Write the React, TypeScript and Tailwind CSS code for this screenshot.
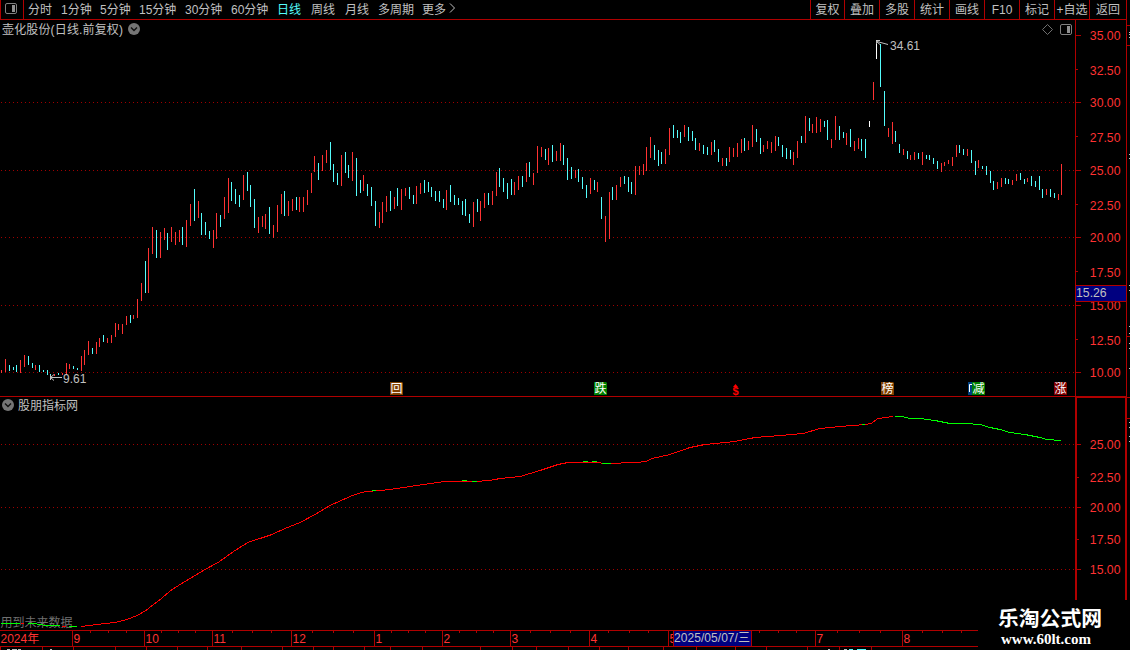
type Kind = 'u' | 'd' | 'w'
type Bar = [number, number, number, Kind]

// x, high, low, direction (u = up, d = down, w = limit move)
const bars: Bar[] = [
  [1, 370, 373, 'u'], [5, 359, 372, 'u'], [9, 365, 371, 'd'], [13, 367, 370, 'd'], [16, 365, 372, 'd'],
  [20, 360, 373, 'u'], [24, 355, 367, 'u'], [28, 356, 365, 'd'], [32, 363, 368, 'd'], [35, 365, 370, 'u'],
  [39, 365, 372, 'd'], [43, 370, 372, 'd'], [47, 370, 375, 'd'], [50, 374, 376, 'd'], [54, 374, 376, 'u'],
  [58, 373, 375, 'd'], [62, 373, 375, 'u'], [66, 363, 374, 'u'], [69, 364, 369, 'u'], [73, 366, 369, 'd'],
  [77, 368, 370, 'd'], [81, 356, 371, 'u'], [84, 350, 365, 'u'], [88, 341, 355, 'u'], [92, 348, 354, 'd'],
  [96, 342, 354, 'u'], [99, 338, 347, 'u'], [103, 335, 342, 'd'], [107, 338, 343, 'u'], [111, 335, 343, 'u'],
  [115, 323, 337, 'u'], [118, 324, 330, 'u'], [122, 324, 334, 'u'], [126, 316, 325, 'u'], [130, 315, 323, 'd'],
  [133, 315, 319, 'u'], [137, 299, 318, 'u'], [141, 283, 301, 'u'], [145, 261, 293, 'd'], [148, 248, 293, 'u'],
  [152, 227, 254, 'u'], [156, 230, 258, 'd'], [160, 232, 258, 'u'], [164, 228, 240, 'u'], [167, 233, 250, 'd'],
  [171, 227, 242, 'u'], [175, 232, 245, 'u'], [179, 230, 242, 'u'], [182, 227, 245, 'd'], [186, 220, 247, 'u'],
  [190, 204, 226, 'u'], [194, 189, 221, 'd'], [198, 201, 218, 'u'], [201, 213, 235, 'd'], [205, 222, 235, 'd'],
  [209, 231, 239, 'd'], [213, 230, 248, 'u'], [216, 213, 239, 'u'], [220, 215, 227, 'd'], [224, 197, 219, 'u'],
  [228, 178, 213, 'u'], [231, 182, 201, 'd'], [235, 189, 204, 'd'], [239, 195, 207, 'd'], [243, 175, 200, 'u'],
  [247, 172, 191, 'd'], [250, 185, 207, 'd'], [254, 199, 228, 'd'], [258, 217, 233, 'u'], [262, 216, 227, 'u'],
  [265, 214, 229, 'u'], [269, 207, 234, 'd'], [273, 225, 238, 'u'], [277, 205, 232, 'u'], [281, 194, 214, 'u'],
  [284, 191, 216, 'd'], [288, 201, 216, 'u'], [292, 199, 211, 'u'], [296, 197, 210, 'd'], [299, 197, 212, 'u'],
  [303, 197, 212, 'u'], [307, 190, 205, 'u'], [311, 173, 193, 'u'], [314, 156, 172, 'u'], [318, 163, 180, 'd'],
  [322, 155, 171, 'u'], [326, 150, 163, 'u'], [330, 142, 170, 'd'], [333, 164, 182, 'd'], [337, 173, 185, 'd'],
  [341, 155, 186, 'u'], [345, 152, 173, 'd'], [348, 165, 178, 'd'], [352, 152, 181, 'u'], [356, 158, 196, 'd'],
  [360, 180, 193, 'd'], [363, 175, 191, 'u'], [367, 184, 196, 'd'], [371, 187, 206, 'd'], [375, 201, 226, 'd'],
  [379, 212, 228, 'u'], [382, 202, 223, 'u'], [386, 196, 212, 'u'], [390, 191, 211, 'd'], [394, 197, 209, 'u'],
  [397, 188, 206, 'd'], [401, 189, 210, 'u'], [405, 188, 196, 'u'], [409, 187, 199, 'd'], [413, 195, 204, 'd'],
  [416, 186, 204, 'u'], [420, 183, 194, 'u'], [424, 180, 193, 'd'], [428, 182, 192, 'd'], [431, 187, 197, 'd'],
  [435, 191, 201, 'd'], [439, 191, 202, 'd'], [443, 199, 208, 'd'], [446, 190, 210, 'u'], [450, 185, 202, 'd'],
  [454, 195, 205, 'd'], [458, 198, 205, 'd'], [462, 201, 215, 'd'], [465, 199, 216, 'd'], [469, 214, 223, 'd'],
  [473, 202, 227, 'u'], [477, 199, 212, 'd'], [480, 201, 221, 'u'], [484, 193, 208, 'u'], [488, 193, 205, 'd'],
  [492, 191, 205, 'u'], [496, 172, 196, 'u'], [499, 168, 187, 'd'], [503, 178, 192, 'd'], [507, 183, 199, 'd'],
  [511, 179, 195, 'd'], [514, 182, 195, 'u'], [518, 176, 190, 'u'], [522, 176, 187, 'd'], [526, 163, 182, 'u'],
  [529, 162, 177, 'd'], [533, 173, 185, 'u'], [537, 146, 173, 'u'], [541, 147, 157, 'u'], [545, 149, 160, 'd'],
  [548, 148, 165, 'u'], [552, 145, 162, 'd'], [556, 151, 161, 'u'], [560, 143, 161, 'u'], [563, 145, 165, 'd'],
  [567, 158, 180, 'd'], [571, 167, 179, 'd'], [575, 170, 178, 'u'], [578, 169, 182, 'd'], [582, 177, 189, 'd'],
  [586, 185, 198, 'd'], [590, 178, 194, 'u'], [594, 180, 190, 'd'], [597, 182, 192, 'u'], [601, 197, 219, 'd'],
  [605, 216, 242, 'u'], [609, 192, 239, 'u'], [612, 187, 200, 'd'], [616, 185, 200, 'u'], [620, 177, 187, 'u'],
  [624, 176, 184, 'd'], [628, 177, 192, 'd'], [631, 182, 194, 'd'], [635, 166, 195, 'u'], [639, 166, 175, 'u'],
  [643, 164, 175, 'u'], [646, 147, 171, 'u'], [650, 137, 158, 'u'], [654, 145, 160, 'd'], [658, 150, 166, 'd'],
  [661, 152, 164, 'd'], [665, 149, 164, 'u'], [669, 128, 155, 'u'], [673, 125, 138, 'd'], [677, 130, 138, 'd'],
  [680, 132, 143, 'd'], [684, 125, 137, 'u'], [688, 127, 141, 'd'], [692, 131, 141, 'd'], [695, 138, 150, 'd'],
  [699, 143, 151, 'u'], [703, 145, 154, 'd'], [707, 147, 155, 'd'], [711, 142, 155, 'u'], [714, 140, 152, 'd'],
  [718, 149, 162, 'd'], [722, 158, 166, 'u'], [726, 158, 166, 'd'], [729, 147, 162, 'u'], [733, 148, 157, 'u'],
  [737, 143, 157, 'u'], [741, 139, 153, 'u'], [744, 138, 151, 'd'], [748, 141, 150, 'u'], [752, 125, 147, 'u'],
  [756, 129, 142, 'd'], [760, 138, 154, 'd'], [763, 145, 152, 'u'], [767, 141, 149, 'u'], [771, 142, 153, 'u'],
  [775, 136, 151, 'u'], [778, 137, 146, 'd'], [782, 145, 157, 'd'], [786, 148, 159, 'd'], [790, 150, 159, 'd'],
  [793, 152, 165, 'u'], [797, 141, 158, 'u'], [801, 136, 143, 'd'], [805, 116, 143, 'u'], [809, 118, 131, 'd'],
  [812, 124, 133, 'u'], [816, 117, 133, 'u'], [820, 119, 132, 'u'], [824, 121, 127, 'd'], [827, 120, 140, 'd'],
  [831, 139, 148, 'u'], [835, 116, 140, 'u'], [839, 126, 140, 'd'], [843, 132, 138, 'd'], [846, 133, 145, 'u'],
  [850, 129, 147, 'd'], [854, 141, 151, 'u'], [858, 138, 149, 'u'], [861, 139, 151, 'd'], [865, 139, 158, 'd'],
  [869, 121, 127, 'w'], [873, 82, 100, 'u'], [876, 40, 59, 'w'], [880, 44, 87, 'd'], [884, 91, 126, 'd'],
  [888, 128, 137, 'u'], [892, 122, 144, 'u'], [895, 131, 142, 'd'], [899, 144, 153, 'd'], [903, 149, 155, 'u'],
  [907, 151, 159, 'd'], [910, 155, 160, 'u'], [914, 152, 160, 'u'], [918, 153, 159, 'd'], [922, 152, 165, 'u'],
  [926, 155, 159, 'd'], [929, 155, 160, 'd'], [933, 158, 164, 'd'], [937, 161, 169, 'd'], [941, 163, 172, 'u'],
  [944, 162, 166, 'u'], [948, 160, 164, 'u'], [952, 157, 166, 'u'], [956, 145, 157, 'u'], [959, 145, 153, 'd'],
  [963, 149, 155, 'd'], [967, 149, 156, 'u'], [971, 150, 163, 'd'], [975, 161, 175, 'd'], [978, 160, 168, 'u'],
  [982, 166, 169, 'd'], [986, 166, 175, 'd'], [990, 171, 183, 'd'], [993, 181, 190, 'd'], [997, 182, 189, 'u'],
  [1001, 178, 187, 'u'], [1005, 178, 184, 'd'], [1008, 179, 184, 'd'], [1012, 180, 185, 'u'], [1016, 174, 181, 'u'],
  [1020, 173, 180, 'd'], [1024, 179, 184, 'd'], [1027, 178, 182, 'u'], [1031, 176, 186, 'd'], [1035, 181, 187, 'd'],
  [1039, 176, 190, 'd'], [1042, 189, 198, 'd'], [1046, 189, 195, 'u'], [1050, 189, 197, 'd'], [1054, 193, 198, 'd'],
  [1058, 194, 200, 'u'], [1061, 164, 195, 'u'],
]

const barColor = { u: '#ff3232', d: '#54fcfc', w: '#ffffff' }

const periods = [
  { label: '分时', width: 'w-[33px]' },
  { label: '1分钟', width: 'w-[39px]' },
  { label: '5分钟', width: 'w-[39px]' },
  { label: '15分钟', width: 'w-[46px]' },
  { label: '30分钟', width: 'w-[46px]' },
  { label: '60分钟', width: 'w-[46px]' },
  { label: '日线', width: 'w-[34px]', active: true },
  { label: '周线', width: 'w-[34px]' },
  { label: '月线', width: 'w-[33px]' },
  { label: '多周期', width: 'w-[44px]' },
  { label: '更多', width: 'w-[27px]' },
]

const tools = ['复权', '叠加', '多股', '统计', '画线', 'F10', '标记', '+自选']

const priceLabels = [
  ['35.00', 35], ['32.50', 70], ['30.00', 102], ['27.50', 137], ['25.00', 170], ['22.50', 205],
  ['20.00', 237], ['17.50', 272], ['15.00', 305], ['12.50', 340], ['10.00', 372],
] as const

const subLabels = [['25.00', 444], ['22.50', 477], ['20.00', 507], ['17.50', 539], ['15.00', 569]] as const

const months = [
  ['2024年', -1], ['9', 72], ['10', 144], ['11', 212], ['12', 291], ['1', 374], ['2', 442],
  ['3', 510], ['4', 589], ['5', 668], ['7', 815], ['8', 902],
] as const

const weekTicks = [
  90, 108, 126, 161, 178, 195, 232, 252, 271, 312, 333, 353, 391, 408, 425, 459, 476, 493,
  530, 550, 570, 608, 629, 648, 759, 778, 796, 837, 859, 880, 922, 942, 961,
]

const tabTicks = [
  0, 42, 73, 115, 146, 177, 207, 241, 282, 313, 333, 364, 390, 422, 480, 512, 536, 568, 599,
  628, 663, 696, 735, 766, 807, 839, 871,
]

const badges = [
  { char: '回', x: 390, fill: '#804000' },
  { char: '跌', x: 594, fill: '#008000' },
  { char: '榜', x: 881, fill: '#804000' },
  { char: '减', x: 972, fill: '#008000' },
  { char: '涨', x: 1054, fill: '#800000' },
]

const trend =
  '81,626 90,625 97,624 106,623 115,622 127,619 137,615 146,610 152,605 159,600 172,589 190,578 205,569 218,562 235,550 243,545 250,541 260,538 272,534 285,528 300,522 315,514 330,505 350,496 358,493 366,491 380,490 390,489 410,486 430,483 445,481 475,481 490,480 500,478 520,476 540,470 558,464 568,462 595,462 606,463 636,462 646,461 652,458 670,454 690,447 705,444 735,441 755,437 780,435 803,433 820,428 840,426 865,424 871,423 878,418 886,417 893,416'

const greenParts = [
  '1,623 20,623', '28,623 34,623 46,625 60,625', '69,626 77,626', '372,490 376,490', '462,480 467,480',
  '472,481 477,481', '583,461 588,461', '592,461 597,461', '602,463 611,463', '862,424 865,424',
  '895,416 902,416 910,418 920,418 935,420 950,423 965,423 980,424 990,427 1000,429 1010,432 1025,434 1040,437 1047,439 1061,440',
]

function PanelIcon() {
  return (
    <svg width="12" height="11" viewBox="0 0 12 11" className="shrink-0">
      <rect x="0.5" y="0.5" width="11" height="10" rx="1.5" fill="none" stroke="#808080" />
      <rect x="7" y="2" width="3" height="7" fill="#909090" />
    </svg>
  )
}

function ToggleIcon() {
  return (
    <svg width="12" height="12" viewBox="0 0 12 12" className="shrink-0">
      <circle cx="6" cy="6" r="6" fill="#757575" />
      <path d="M3 4.5 6 7.5 9 4.5" fill="none" stroke="#101010" strokeWidth="1.4" />
    </svg>
  )
}

function GridLines({ rows }: { rows: number[] }) {
  return (
    <g stroke="#a00000" strokeDasharray="1 3" shapeRendering="crispEdges">
      {rows.map((y) => (
        <line key={y} x1="1" x2="1075" y1={y + 0.5} y2={y + 0.5} />
      ))}
    </g>
  )
}

function Toolbar() {
  return (
    <div className="flex h-5 shrink-0 items-stretch border-b border-l border-[#b00000] leading-[20px]">
      <div className="flex w-[23px] items-center border-r border-[#b00000] pb-[2px] pl-1">
        <PanelIcon />
      </div>
      <div className="flex flex-1 items-start pl-1">
        {periods.map((p) => (
          <span key={p.label} className={`${p.width} shrink-0 whitespace-nowrap ${p.active ? 'text-[#54fcfc]' : ''}`}>
            {p.label}
          </span>
        ))}
        <svg width="7" height="10" viewBox="0 0 7 10" className="mt-[3px]">
          <path d="M1 0.5 5.5 5 1 9.5" fill="none" stroke="#c0c0c0" />
        </svg>
      </div>
      <div className="flex text-center">
        <span className="w-[34px] border-l border-[#b00000]">{tools[0]}</span>
        {tools.slice(1).map((t) => (
          <span key={t} className="w-[35px] whitespace-nowrap border-l border-[#b00000]">
            {t}
          </span>
        ))}
        <span className="w-[37px] border-l border-[#b00000]">返回</span>
      </div>
    </div>
  )
}

function PriceChart() {
  return (
    <svg width="1075" height="358" viewBox="0 38 1075 358" className="block">
      <GridLines rows={[102, 170, 237, 305, 372]} />
      <g shapeRendering="crispEdges">
        {bars.map(([x, top, bottom, kind]) => (
          <rect key={x} x={x} y={top} width="1" height={bottom - top} fill={barColor[kind]} />
        ))}
      </g>

      {/* High / low callouts */}
      <g fill="none" stroke="#c0c0c0">
        <path d="M50.5 377.5H62M50.5 377.5 54 374.5M50.5 377.5 54 380.5M50.5 375v5" />
        <path d="M876.5 44V40.5H880M877 41.5 888 44.5M877 42l3 2.5" />
      </g>
      <g fill="#c0c0c0" fontSize="12">
        <text x="63" y="383">9.61</text>
        <text x="890" y="50">34.61</text>
      </g>

      {/* Event badges */}
      <rect x="968" y="382" width="12" height="13" fill="#004080" />
      <path d="M969.5 392V384.5H972" fill="none" stroke="#fff" />
      {badges.map((b) => (
        <g key={b.x}>
          <path d={`M${b.x} 382h12l1 1v12h-13z`} fill={b.fill} />
          <text x={b.x + 0.5} y="393" fontSize="12" fill="#fff">
            {b.char}
          </text>
        </g>
      ))}
      <path d="M735.5 384 738 387h-5z" fill="#f00" />
      <text x="732.5" y="395" fontSize="11" fontWeight="bold" fill="#f00">
        $
      </text>
    </svg>
  )
}

function PriceAxis() {
  return (
    <svg width="51" height="376" viewBox="1075 20 51 376" className="block">
      <g fill="#b00000" shapeRendering="crispEdges">
        <rect x="1075" y="20" width="1" height="376" />
        {[35, 102, 170, 237, 305, 372].map((y) => (
          <rect key={y} x="1076" y={y} width="5" height="1" />
        ))}
        {[69, 136, 204, 271, 339].map((y) => (
          <rect key={y} x="1076" y={y} width="2" height="1" />
        ))}
      </g>
      <g fill="#ff3232" fontSize="12.25" textAnchor="end">
        {priceLabels.map(([label, y]) => (
          <text key={label} x="1120.5" y={y + 5}>
            {label}
          </text>
        ))}
      </g>
      <rect x="1076" y="285" width="50" height="17" fill="#b00000" />
      <rect x="1076" y="286" width="50" height="15" fill="#000080" />
      <text x="1076" y="297" fontSize="12.25" fill="#c0c0c0">
        15.26
      </text>
    </svg>
  )
}

function IndicatorChart() {
  return (
    <svg width="1075" height="217" viewBox="0 413 1075 217" className="block">
      <GridLines rows={[444, 507, 569]} />
      <text x="0.5" y="627" fontSize="12" fill="#707070">
        用到未来数据
      </text>
      <g fill="none" transform="translate(0 .5)" shapeRendering="crispEdges">
        <polyline points={trend} stroke="#f00" />
        <path d="M21 623h3M62 626h4" stroke="#f00" />
        {greenParts.map((p) => (
          <polyline key={p} points={p} stroke="#0f0" />
        ))}
      </g>
    </svg>
  )
}

function IndicatorAxis() {
  return (
    <svg width="51" height="233" viewBox="1075 397 51 233" className="block">
      <g fill="#b00000" shapeRendering="crispEdges">
        <rect x="1075" y="397" width="2" height="233" />
        <rect x="1125" y="397" width="1" height="233" />
        <rect x="1075" y="397" width="51" height="1" />
        {[444, 507, 569].map((y) => (
          <rect key={y} x="1077" y={y} width="4" height="1" />
        ))}
        {[477, 539].map((y) => (
          <rect key={y} x="1077" y={y} width="2" height="1" />
        ))}
      </g>
      <g fill="#ff3232" fontSize="12.25" textAnchor="end">
        {subLabels.map(([label, y]) => (
          <text key={label} x="1120.5" y={y + 5}>
            {label}
          </text>
        ))}
      </g>
    </svg>
  )
}

function TimeAxis() {
  return (
    <svg width="1126" height="19" viewBox="0 631 1126 19" className="block">
      <g fill="#b00000" shapeRendering="crispEdges">
        <rect x="0" y="646" width="1126" height="1" />
        {weekTicks.map((x) => (
          <rect key={x} x={x} y="631" width="1" height="2" />
        ))}
        {tabTicks.map((x) => (
          <rect key={x} x={x} y="647" width="1" height="3" />
        ))}
        {months.map(([label, x]) => (
          <rect key={label} x={x} y="631" width="1" height="15" />
        ))}
      </g>
      <g fill="#ff3232" fontSize="12">
        {months.map(([label, x]) => (
          <text key={label} x={x + 1.5} y="643">
            {label}
          </text>
        ))}
      </g>
      <rect x="673" y="631" width="79" height="15" fill="#b00000" />
      <rect x="674" y="631" width="77" height="15" fill="#000080" />
      <text x="674" y="642" fontSize="12" fill="#c0c0c0" textLength="76">
        2025/05/07/三
      </text>
      <g fill="#c0c0c0" shapeRendering="crispEdges">
        <path d="M7 649h3v1h-3zM12 649h5v1h-5zM18 649h3v1h-3zM50 649h2v1h-2zM828 649h2v1h-2zM844 649h3v1h-3z" />
        <path d="M849 649h4v1h-4zM857 649h9v1h-9z" fill="#54fcfc" />
      </g>
    </svg>
  )
}

// Sliver of the neighbouring quote panel
function EdgeStrip() {
  return (
    <svg width="4" height="650" viewBox="1126 0 4 650" className="block" shapeRendering="crispEdges">
      <rect x="1126" y="0" width="1" height="650" fill="#b00000" />
      {[25, 45, 336, 397, 418].map((y) => (
        <rect key={y} x="1127" y={y} width="3" height="1" fill="#b00000" />
      ))}
      {[32, 34, 37, 154, 158, 285, 290, 326, 333, 343, 348, 368, 422, 427, 436, 441].map((y) => (
        <rect key={y} x="1129" y={y} width="1" height="1" fill="#c0c0c0" />
      ))}
    </svg>
  )
}

export default function App() {
  return (
    <div className="relative flex h-[650px] w-[1130px] overflow-hidden bg-black font-['Liberation_Sans','Noto_Sans_CJK_SC',sans-serif] text-[12px] text-[#c0c0c0]">
      <div className="flex w-[1126px] flex-col">
        <Toolbar />

        {/* Candles */}
        <div className="flex h-[377px] shrink-0 border-b border-[#b00000]">
          <div className="w-[1075px]">
            <div className="flex h-[18px] items-center pl-[2px] pr-[3px]">
              <span className="mr-[5px] whitespace-nowrap pt-[2px] leading-[18px] tracking-[0.15px]">
                壶化股份(日线.前复权)
              </span>
              <ToggleIcon />
              <div className="ml-auto flex items-center gap-[7px]">
                <svg width="11" height="11" viewBox="0 0 11 11">
                  <path d="M5.5 0.5 10.5 5.5 5.5 10.5 0.5 5.5Z" fill="none" stroke="#707070" />
                </svg>
                <PanelIcon />
              </div>
            </div>
            <PriceChart />
          </div>
          <PriceAxis />
        </div>

        {/* Indicator */}
        <div className="flex h-[234px] shrink-0 border-b border-[#b00000]">
          <div className="w-[1075px]">
            <div className="flex h-4 items-center gap-1 pl-[2px]">
              <ToggleIcon />
              <span className="pt-[2px] leading-4">股朋指标网</span>
            </div>
            <IndicatorChart />
          </div>
          <IndicatorAxis />
        </div>

        <TimeAxis />
      </div>
      <EdgeStrip />

      {/* Watermark */}
      <div className="absolute bottom-0 right-0 flex h-[50px] w-[152px] flex-col items-start bg-black pl-5 pt-[7px] font-bold text-white">
        <span className="whitespace-nowrap text-[20.8px] leading-6">乐淘公式网</span>
        <span className="pl-[3px] font-['Liberation_Serif',serif] text-[15px] leading-4">www.60lt.com</span>
      </div>
    </div>
  )
}
